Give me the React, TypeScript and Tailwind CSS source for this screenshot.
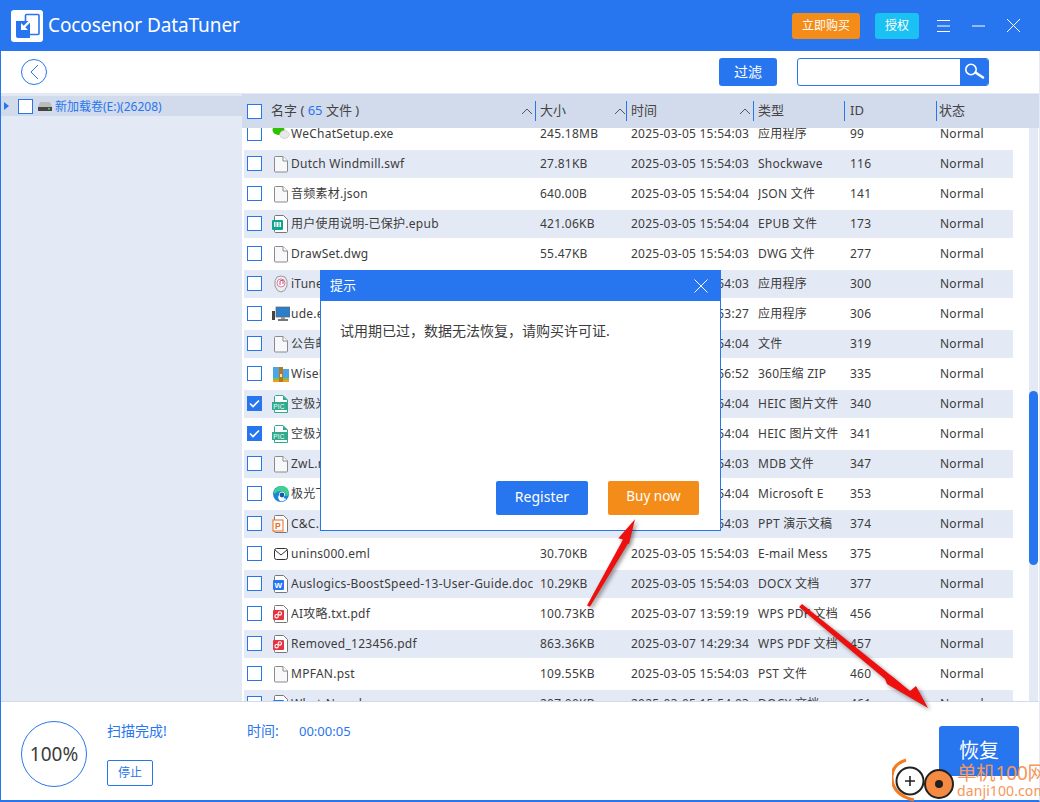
const FONT = "font-['Noto_Sans','Noto_Sans_CJK_SC',sans-serif]";

type Row = { name: string; icon: string; size: string; time: string; type: string; id: string; checked?: boolean };

const rows: Row[] = [
  { name: "WeChatSetup.exe", icon: "wechat", size: "245.18MB", time: "2025-03-05 15:54:03", type: "应用程序", id: "99" },
  { name: "Dutch Windmill.swf", icon: "file", size: "27.81KB", time: "2025-03-05 15:54:03", type: "Shockwave", id: "116" },
  { name: "音频素材.json", icon: "file", size: "640.00B", time: "2025-03-05 15:54:04", type: "JSON 文件", id: "141" },
  { name: "用户使用说明-已保护.epub", icon: "epub", size: "421.06KB", time: "2025-03-05 15:54:04", type: "EPUB 文件", id: "173" },
  { name: "DrawSet.dwg", icon: "file", size: "55.47KB", time: "2025-03-05 15:54:03", type: "DWG 文件", id: "277" },
  { name: "iTunesSetup.exe", icon: "itunes", size: "198.20MB", time: "2025-03-05 15:54:03", type: "应用程序", id: "300" },
  { name: "ude.exe", icon: "monitor", size: "3.12MB", time: "2025-03-05 15:53:27", type: "应用程序", id: "306" },
  { name: "公告邮件", icon: "file", size: "12.40KB", time: "2025-03-05 15:54:04", type: "文件", id: "319" },
  { name: "WiseData.zip", icon: "zip", size: "8.64MB", time: "2025-03-05 15:56:52", type: "360压缩 ZIP", id: "335" },
  { name: "空极光.heic", icon: "pic", size: "1.02MB", time: "2025-03-05 15:54:04", type: "HEIC 图片文件", id: "340", checked: true },
  { name: "空极光2.heic", icon: "pic", size: "1.18MB", time: "2025-03-05 15:54:04", type: "HEIC 图片文件", id: "341", checked: true },
  { name: "ZwL.mdb", icon: "file", size: "96.00KB", time: "2025-03-05 15:54:03", type: "MDB 文件", id: "347" },
  { name: "极光下载", icon: "edge", size: "24.30KB", time: "2025-03-05 15:54:04", type: "Microsoft E", id: "353" },
  { name: "C&C.ppt", icon: "ppt", size: "55.20KB", time: "2025-03-05 15:54:03", type: "PPT 演示文稿", id: "374" },
  { name: "unins000.eml", icon: "mail", size: "30.70KB", time: "2025-03-05 15:54:03", type: "E-mail Mess", id: "375" },
  { name: "Auslogics-BoostSpeed-13-User-Guide.docx", icon: "word", size: "10.29KB", time: "2025-03-05 15:54:03", type: "DOCX 文档", id: "377" },
  { name: "AI攻略.txt.pdf", icon: "pdf", size: "100.73KB", time: "2025-03-07 13:59:19", type: "WPS PDF 文档", id: "456" },
  { name: "Removed_123456.pdf", icon: "pdf", size: "863.36KB", time: "2025-03-07 14:29:34", type: "WPS PDF 文档", id: "457" },
  { name: "MPFAN.pst", icon: "file", size: "109.55KB", time: "2025-03-05 15:54:03", type: "PST 文件", id: "460" },
  { name: "What-New.docx", icon: "word", size: "207.00KB", time: "2025-03-05 15:54:03", type: "DOCX 文档", id: "461" },
];

function Checkbox({ checked }: { checked?: boolean }) {
  return (
    <div className={`w-[15px] h-[15px] shrink-0 border border-[#2876ef] flex items-center justify-center ${checked ? "bg-[#2876ef]" : "bg-white"}`}>
      {checked && (
        <svg width="11" height="9" viewBox="0 0 11 9" fill="none">
          <path d="M1 4.5 L4 7.5 L10 1.5" stroke="white" strokeWidth="1.6" />
        </svg>
      )}
    </div>
  );
}

function FileIcon({ icon }: { icon: string }) {
  const doc = "M3.5 .5 H11.5 L15.5 4.5 V16.5 Q15.5 17.5 14.5 17.5 H3.5 Q2.5 17.5 2.5 16.5 V1.5 Q2.5 .5 3.5 .5 Z";
  switch (icon) {
    case "wechat":
      return (
        <svg width="18" height="18" viewBox="0 0 18 18">
          <ellipse cx="6.5" cy="5" rx="6" ry="5" fill="#2dc100" />
          <ellipse cx="12.5" cy="9.5" rx="4.8" ry="4" fill="#e8e8e8" stroke="#bbb" strokeWidth=".5" />
        </svg>
      );
    case "epub":
      return (
        <svg width="18" height="18" viewBox="0 0 18 18">
          <path d={doc} fill="#fff" stroke="#777" />
          <rect x="0" y="5" width="11" height="10" rx="1" fill="#0fa58c" />
          <rect x="2" y="7" width="7" height="5" fill="#fff" />
          <path d="M4 7v5M7 7v5" stroke="#0fa58c" />
        </svg>
      );
    case "itunes":
      return (
        <svg width="18" height="18" viewBox="0 0 18 18">
          <path d="M5 2 Q9 0 13 2 Q16 5 15 11 Q13 17 9 17 Q5 17 3 11 Q2 5 5 2Z" fill="#eee" stroke="#999" />
          <circle cx="9" cy="8" r="4" fill="#fff" stroke="#d77ca8" />
          <path d="M8 10V6l3-1v4" stroke="#d0437f" fill="none" />
        </svg>
      );
    case "monitor":
      return (
        <svg width="18" height="18" viewBox="0 0 18 18">
          <rect x="0" y="6" width="3" height="9" fill="#444" />
          <rect x="4" y="2" width="14" height="10" fill="#2b7fc9" stroke="#666" strokeWidth=".7" />
          <rect x="9" y="12" width="4" height="2" fill="#999" />
          <rect x="6" y="14" width="10" height="2" fill="#777" />
        </svg>
      );
    case "zip":
      return (
        <svg width="18" height="18" viewBox="0 0 18 18">
          <path d="M1 2 H7 L9 4 H17 V13 H1Z" fill="#4aa6e8" />
          <rect x="1" y="13" width="16" height="2" fill="#7cc142" />
          <rect x="1" y="15" width="16" height="2" fill="#f29b1d" />
          <rect x="7" y="2" width="4" height="15" fill="#b8761e" />
          <rect x="8" y="9" width="2" height="3" fill="#fde9a8" />
        </svg>
      );
    case "pic":
      return (
        <svg width="18" height="18" viewBox="0 0 18 18">
          <path d="M3.5 .5 H11 L15.5 5 V17.5 H2.5 V1.5Z" fill="#fff" stroke="#2faa8d" />
          <path d="M11 .5 V5 H15.5Z" fill="#2faa8d" />
          <rect x="0" y="7" width="16" height="8" fill="#2faa8d" />
          <text x="1.2" y="13.5" fontSize="6.5" fill="#fff" fontFamily="Liberation Sans">PIC</text>
        </svg>
      );
    case "edge":
      return (
        <svg width="18" height="18" viewBox="0 0 18 18">
          <circle cx="9" cy="9" r="8" fill="#1b86d6" />
          <path d="M2 6 Q5 1 10 1 Q16 1 17 8 Q17 11 13 11 Q15 7 10 6 Q6 5.5 2 9Z" fill="#3fd08c" />
          <path d="M7 10 Q7 6.5 10.5 6.5 Q13.5 7 13 10.5 Q10 13.5 14.5 14 Q11 17 8 16 Q5 13 7 10Z" fill="#fff" />
          <circle cx="10" cy="10" r="2.4" fill="#0c5fa8" />
        </svg>
      );
    case "ppt":
      return (
        <svg width="18" height="18" viewBox="0 0 18 18">
          <path d={doc} fill="#fff" stroke="#777" />
          <rect x="1" y="5" width="10" height="11" fill="#fff" stroke="#ea6a1c" />
          <text x="3" y="14" fontSize="8.5" fontWeight="700" fill="#ea6a1c" fontFamily="Liberation Sans">P</text>
        </svg>
      );
    case "mail":
      return (
        <svg width="18" height="18" viewBox="0 0 18 18" fill="none" stroke="#333">
          <rect x="2.5" y="3.5" width="13" height="11" rx="2" />
          <path d="M3 5 L9 10 L15 5" />
        </svg>
      );
    case "word":
      return (
        <svg width="18" height="18" viewBox="0 0 18 18">
          <path d={doc} fill="#fff" stroke="#777" />
          <rect x="1" y="5" width="11" height="10" rx="1" fill="#2876ef" />
          <text x="2.6" y="13.2" fontSize="8" fontWeight="700" fill="#fff" fontFamily="Liberation Sans">W</text>
        </svg>
      );
    case "pdf":
      return (
        <svg width="18" height="18" viewBox="0 0 18 18">
          <path d={doc} fill="#fff" stroke="#777" />
          <rect x="1" y="5" width="11" height="10" rx="1" fill="#e5333f" />
          <circle cx="7.8" cy="8.4" r="1.7" fill="none" stroke="#fff" strokeWidth="1.1" />
          <circle cx="4.6" cy="11.2" r="1.7" fill="none" stroke="#fff" strokeWidth="1.1" />
        </svg>
      );
    default:
      return (
        <svg width="18" height="18" viewBox="0 0 18 18">
          <path d="M3.5 1.5 H11 L15.5 6 V16 Q15.5 17 14.5 17 H3.5 Q2.5 17 2.5 16 V2.5 Q2.5 1.5 3.5 1.5 Z" fill="#f7f8fa" stroke="#8a8a8a" />
          <path d="M11 1.5 V6 H15.5" fill="#fff" stroke="#8a8a8a" />
        </svg>
      );
  }
}

function Chevron() {
  return (
    <svg width="12" height="7" viewBox="0 0 12 7" fill="none" stroke="#555" strokeWidth="1">
      <path d="M1 6 L6 1 L11 6" />
    </svg>
  );
}

function Divider() {
  return <div className="w-px h-[20px] bg-[#2876ef] shrink-0" />;
}

function TitleBar() {
  return (
    <div className="h-[51px] shrink-0 bg-[#2876ef] flex items-center text-white">
      <div className="ml-[11px] w-[32px] h-[32px] bg-white rounded-[3px] flex items-center justify-center">
        <svg width="26" height="26" viewBox="0 0 26 26">
          <rect x="11.5" y="1.5" width="13.5" height="20" rx="1" fill="none" stroke="#2876ef" strokeWidth="1.6" />
          <path d="M2 8 H16 V25 H4 Q2 25 2 23Z" fill="#2876ef" />
          <path d="M18 6 L10 14" stroke="#fff" strokeWidth="2.4" fill="none" />
          <path d="M7 10 V17 H14Z" fill="#fff" />
        </svg>
      </div>
      <div className="ml-[5px] text-[19px] tracking-[-0.1px] leading-none">Cocosenor DataTuner</div>
      <div className="ml-auto w-[68px] h-[26px] rounded-[3px] bg-[#f48c1a] flex items-center justify-center text-[12px]">立即购买</div>
      <div className="ml-[15px] w-[44px] h-[26px] rounded-[3px] bg-[#1ac1f2] flex items-center justify-center text-[12px]">授权</div>
      <svg className="ml-[18px]" width="13" height="12" viewBox="0 0 13 12" stroke="white" strokeWidth="1">
        <path d="M0 .5H13M0 6H13M0 11.5H13" />
      </svg>
      <svg className="ml-[22px]" width="13" height="2" viewBox="0 0 13 2" stroke="white" strokeWidth="1">
        <path d="M0 1H13" />
      </svg>
      <svg className="ml-[22px] mr-[20px]" width="13" height="13" viewBox="0 0 13 13" stroke="white" strokeWidth="1">
        <path d="M0 0L13 13M13 0L0 13" />
      </svg>
    </div>
  );
}

function Toolbar() {
  return (
    <div className="h-[42px] shrink-0 flex items-center bg-white">
      <div className="ml-[20px] w-[26px] h-[26px] rounded-full border border-[#2876ef] flex items-center justify-center">
        <svg width="9" height="16" viewBox="0 0 9 16" fill="none" stroke="#2876ef" strokeWidth="1">
          <path d="M8 1 L1 8 L8 15" />
        </svg>
      </div>
      <div className="ml-auto w-[58px] h-[28px] pb-[2px] rounded-[3px] bg-[#2876ef] text-white text-[14px] flex items-center justify-center">过滤</div>
      <div className="ml-[20px] mr-[50px] w-[192px] h-[28px] rounded-[3px] border border-[#2876ef] flex justify-end bg-white overflow-hidden">
        <div className="w-[28px] bg-[#2876ef] flex items-center justify-center">
          <svg width="22" height="20" viewBox="0 0 22 20" fill="none" stroke="white">
            <circle cx="8" cy="7.5" r="5.2" strokeWidth="1.6" />
            <path d="M12.5 10.5 L20 15.5" strokeWidth="2.6" strokeLinecap="round" />
          </svg>
        </div>
      </div>
    </div>
  );
}

function Sidebar() {
  return (
    <div className="w-[241px] shrink-0 bg-[#e4eaf5] pt-[2px]">
      <div className="h-[20px] bg-[#d2dbeb] flex items-center text-[12px] text-[#2876ef]">
        <div className="ml-[3px] w-0 h-0 border-y-[4px] border-y-transparent border-l-[5px] border-l-[#2876ef]" />
        <div className="ml-[9px]"><Checkbox /></div>
        <svg className="ml-[5px]" width="14" height="10" viewBox="0 0 14 10">
          <path d="M2 1 H12 L14 6 H0Z" fill="#bbb" />
          <rect x="0" y="6" width="14" height="4" fill="#444" />
          <rect x="10" y="7" width="2" height="1.5" fill="#3fd04a" />
        </svg>
        <span className="ml-[3px] pt-[2px]">新加载卷(E:)(26208)</span>
      </div>
    </div>
  );
}

function TableHeader() {
  return (
    <div className="h-[34px] shrink-0 bg-[#d2dbeb] flex items-center text-[13px] leading-[18px] text-[#444] pl-[5px]">
      <div className="w-[288px] flex items-center shrink-0">
        <Checkbox />
        <span className="ml-[9px] -mt-[2px]">名字 ( <span className="text-[#2876ef]">65</span> 文件 )</span>
        <span className="ml-auto mr-[2px]"><Chevron /></span>
      </div>
      <Divider />
      <div className="w-[90px] pl-[4px] flex items-center shrink-0">
        <span className="-mt-[2px]">大小</span>
        <span className="ml-auto"><Chevron /></span>
      </div>
      <Divider />
      <div className="w-[126px] pl-[4px] flex items-center shrink-0">
        <span className="-mt-[2px]">时间</span>
        <span className="ml-auto mr-[2px]"><Chevron /></span>
      </div>
      <Divider />
      <div className="w-[90px] pl-[4px] shrink-0 -mt-[2px]">类型</div>
      <Divider />
      <div className="w-[91px] pl-[5px] shrink-0 -mt-[2px]">ID</div>
      <Divider />
      <div className="pl-[2px] -mt-[2px]">状态</div>
    </div>
  );
}

function FileRow({ row, striped }: { row: Row; striped: boolean }) {
  return (
    <div className="h-[30px] shrink-0 flex items-center">
      <div className={`w-full h-[28px] flex items-center pl-[3px] text-[12px] tracking-[0.25px] text-[#3c3c3c] ${striped ? "bg-[#e4eaf5]" : ""}`}>
        <div className="-mt-px"><Checkbox checked={row.checked} /></div>
        <div className="ml-[10px] w-[18px] h-[18px] shrink-0"><FileIcon icon={row.icon} /></div>
        <div className="ml-[1px] w-[242px] shrink-0 mr-[7px] overflow-hidden whitespace-nowrap">{row.name}</div>
        <div className="w-[91px] shrink-0">{row.size}</div>
        <div className="w-[127px] shrink-0">{row.time}</div>
        <div className="w-[92px] shrink-0 overflow-hidden whitespace-nowrap">{row.type}</div>
        <div className="w-[90px] shrink-0">{row.id}</div>
        <div>Normal</div>
      </div>
    </div>
  );
}

function Table() {
  return (
    <div className="flex-1 min-w-0 flex flex-col">
      <TableHeader />
      <div className="flex-1 min-h-0 flex overflow-hidden">
        <div className="w-[769px] ml-[2px] shrink-0 -mt-[9px]">
          {rows.map((row, i) => (
            <FileRow key={row.id} row={row} striped={i % 2 === 1} />
          ))}
        </div>
        <div className="ml-[16px] w-[9px] shrink-0 bg-[#e4eaf5] pt-[263px]">
          <div className="h-[174px] rounded-[5px] bg-[#2876ef]" />
        </div>
      </div>
    </div>
  );
}

function BottomPanel() {
  return (
    <div className="h-[99px] shrink-0 bg-white border-t border-[#d2dbeb] flex text-[#2876ef]">
      <div className="ml-[20px] mt-[19px] w-[66px] h-[66px] rounded-full border border-[#2876ef] flex items-center justify-center text-[19px] text-[#3c3c3c]">100%</div>
      <div className="ml-[20px] mt-[20px] w-[140px] text-[14px] leading-[18px]">
        <div>扫描完成!</div>
        <div className="mt-[20px] w-[46px] h-[26px] rounded-[2px] border border-[#2876ef] flex items-center justify-center text-[12px]">停止</div>
      </div>
      <div className="mt-[20px] leading-[18px] flex">
        <span className="w-[52px] text-[14px]">时间:</span>
        <span className="text-[13px]">00:00:05</span>
      </div>
      <div className="ml-auto mr-[20px] mt-[24px] w-[80px] h-[50px] rounded-[3px] bg-[#2876ef] text-white text-[20px] flex items-center justify-center">恢复</div>
    </div>
  );
}

function Dialog() {
  return (
    <div className="absolute left-[320px] top-[270px] w-[401px] h-[261px] bg-white border border-[#2876ef] flex flex-col text-[#3c3c3c]">
      <div className="h-[30px] shrink-0 bg-[#2876ef] text-white text-[13px] flex items-center pl-[9px]">
        提示
        <svg className="ml-auto mr-[12px]" width="14" height="14" viewBox="0 0 14 14" stroke="white" strokeWidth="1">
          <path d="M.5 .5L13.5 13.5M13.5 .5L.5 13.5" />
        </svg>
      </div>
      <div className="mt-[20px] ml-[19px] text-[14px] leading-[20px]">试用期已过，数据无法恢复，请购买许可证.</div>
      <div className="mt-auto mb-[15px] mr-[21px] flex justify-end gap-[20px] text-white">
        <div className="w-[92px] h-[34px] pb-[3px] rounded-[2px] bg-[#2876ef] flex items-center justify-center text-[14px]">Register</div>
        <div className="w-[91px] h-[34px] pb-[3px] rounded-[2px] bg-[#f48c1a] flex items-center justify-center text-[13.5px]">Buy now</div>
      </div>
    </div>
  );
}

function Arrows() {
  return (
    <svg className="absolute inset-0 pointer-events-none drop-shadow-[2px_2px_2px_rgba(0,0,0,0.45)]" width="1040" height="802" viewBox="0 0 1040 802">
      <polygon fill="#ee0f0f" points="587,605.5 623,539.5 618.3,538.3 635,519.3 629,544 628,543.5 590,606.7" />
      <polygon fill="#ee0f0f" points="799,607 802,604 889,674 893,677 910,691 916,686 928,708 887,684 885,679" />
    </svg>
  );
}

function Watermark() {
  return (
    <div className="absolute right-[2px] bottom-0 flex items-end pointer-events-none">
      <svg width="64" height="44" viewBox="0 0 64 44">
        <path d="M14 2 Q-4 8 1 26 Q5 38 22 42" fill="none" stroke="#f47a1f" strokeWidth="3" />
        <circle cx="18" cy="23" r="13.5" fill="#fff" stroke="#222" strokeWidth="2" />
        <path d="M13 23H23M18 18V28" stroke="#222" strokeWidth="1.6" />
        <circle cx="47" cy="26" r="14" fill="#f58a42" stroke="#222" strokeWidth="2" />
        <circle cx="47" cy="26" r="4" fill="#222" />
      </svg>
      <div className="w-[81px] ml-[1px] mb-[4px] text-[#f6965a] leading-none whitespace-nowrap">
        <div className="text-[19.5px] tracking-[-0.4px]">单机100网</div>
        <div className="mt-[2px] text-[14px] tracking-[0.1px]">danji100.com</div>
      </div>
    </div>
  );
}

export default function App() {
  return (
    <div className={`relative w-[1040px] h-[802px] overflow-hidden bg-white flex flex-col ${FONT}`}>
      <TitleBar />
      <div className="flex-1 min-h-0 flex flex-col border-x border-b-2 border-[#2876ef] border-r-[#e4eaf5]">
        <Toolbar />
        <div className="flex-1 min-h-0 flex border-t border-[#e4eaf5]">
          <Sidebar />
          <Table />
        </div>
        <BottomPanel />
      </div>
      <Dialog />
      <Arrows />
      <Watermark />
    </div>
  );
}
